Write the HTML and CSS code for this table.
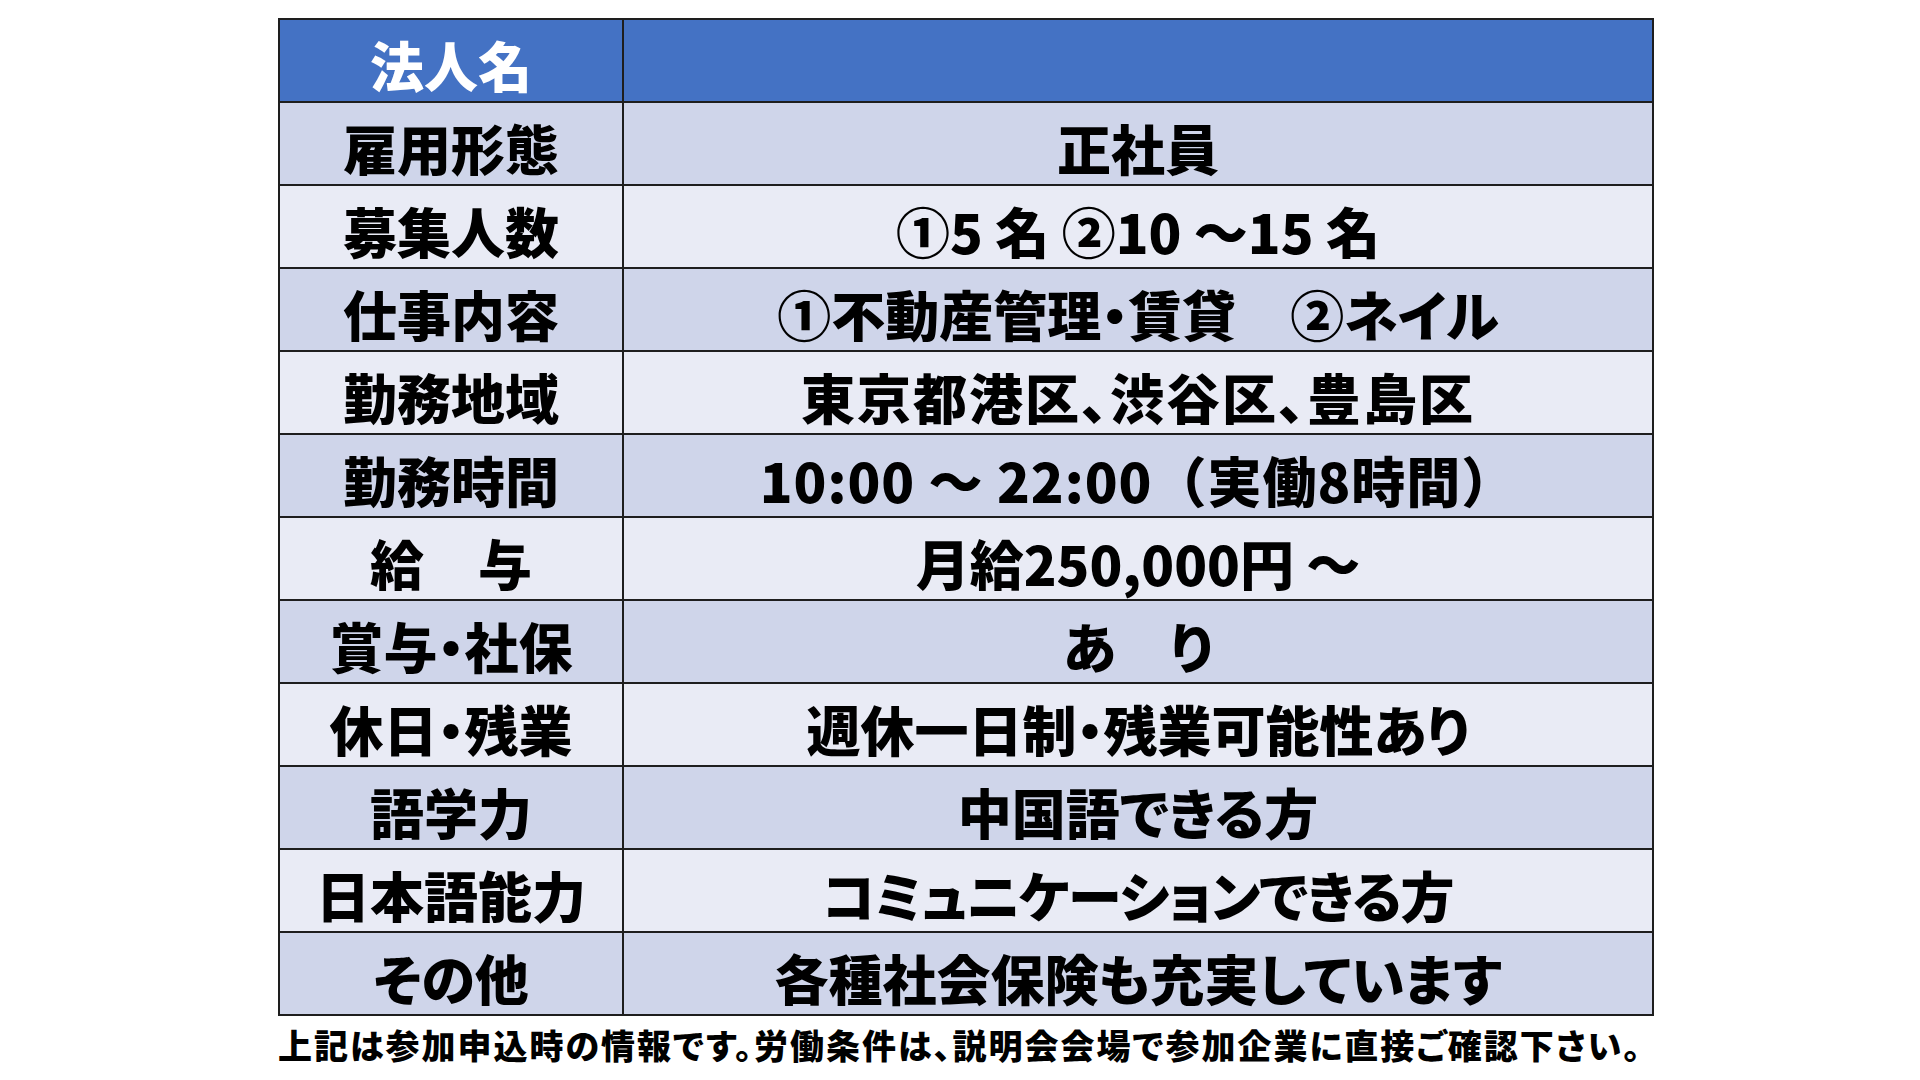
FILE: index.html
```html
<!DOCTYPE html>
<html lang="ja">
<head>
<meta charset="utf-8">
<title>求人情報</title>
<link rel="stylesheet" href="styles.css">
</head>
<body>
<div class="page">
  <table class="job">
    <colgroup><col class="c-label"><col class="c-value"></colgroup>
    <thead>
      <tr class="head"><th class="label">法人名</th><th class="value"></th></tr>
    </thead>
    <tbody>
      <tr class="dark"><td class="label">雇用形態</td><td class="value">正社員</td></tr>
      <tr class="light"><td class="label">募集人数</td><td class="value">①5 名 ②10 ～15 名</td></tr>
      <tr class="dark"><td class="label">仕事内容</td><td class="value">①不動産管理・賃貸　②ネイル</td></tr>
      <tr class="light"><td class="label">勤務地域</td><td class="value wide">東京都港区、渋谷区、豊島区</td></tr>
      <tr class="dark"><td class="label">勤務時間</td><td class="value time">10:00 ～ 22:00（実働8時間）</td></tr>
      <tr class="light"><td class="label">給　与</td><td class="value">月給250,000円 ～</td></tr>
      <tr class="dark"><td class="label">賞与・社保</td><td class="value">あ　り</td></tr>
      <tr class="light"><td class="label">休日・残業</td><td class="value">週休一日制・残業可能性あり</td></tr>
      <tr class="dark"><td class="label">語学力</td><td class="value">中国語できる方</td></tr>
      <tr class="light"><td class="label">日本語能力</td><td class="value tight">コミュニケーションできる方</td></tr>
      <tr class="dark"><td class="label">その他</td><td class="value">各種社会保険も充実しています</td></tr>
    </tbody>
  </table>
  <p class="note">上記は参加申込時の情報です。労働条件は、説明会会場で参加企業に直接ご確認下さい。</p>
</div>
</body>
</html>
```

FILE: styles.css
```css
html, body {
  margin: 0;
  padding: 0;
  background: #ffffff;
}

.page {
  padding: 18px 0 0 278px;
  font-family: "Noto Sans CJK JP", "Noto Sans", sans-serif;
  color: #000;
}

.job {
  border-collapse: collapse;
  width: 1374px;
  table-layout: fixed;
}

.c-label { width: 344px; }
.c-value { width: 1030px; }

.job th,
.job td {
  border: 2px solid #1e1e1e;
  height: 83px;
  padding: 8px 0 0 0;
  text-align: center;
  vertical-align: middle;
  font-size: 54px;
  font-weight: 900;
  line-height: 1;
  white-space: nowrap;
  box-sizing: border-box;
  font-feature-settings: "palt" 1;
}

.job td.wide { letter-spacing: 2px; }
.job td.tight { letter-spacing: -1px; }
.job td.time {
  font-feature-settings: normal;
  letter-spacing: 1px;
}

.head th {
  background: #4472c4;
  color: #ffffff;
}

.dark td { background: #cfd5ea; }
.light td { background: #e9ebf5; }

.note {
  margin: 9px 0 0 0;
  font-size: 34px;
  font-weight: 900;
  line-height: 1.2;
  white-space: nowrap;
  font-feature-settings: "palt" 1;
  letter-spacing: 2px;
}
```
